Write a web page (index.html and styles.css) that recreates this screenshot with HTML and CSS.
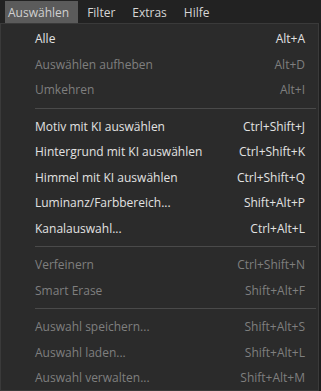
FILE: index.html
```html
<!DOCTYPE html>
<html lang="de">
<head>
    <meta charset="UTF-8">
    <title>Auswählen</title>
    <link rel="stylesheet" href="styles.css">
</head>
<body>
    <div class="menubar">
        <div class="menubar-item active">Auswählen</div>
        <div class="menubar-item">Filter</div>
        <div class="menubar-item">Extras</div>
        <div class="menubar-item">Hilfe</div>
    </div>
    <div class="menu">
        <div class="row"><span>Alle</span><span>Alt+A</span></div>
        <div class="row off"><span>Auswählen aufheben</span><span>Alt+D</span></div>
        <div class="row off"><span>Umkehren</span><span>Alt+I</span></div>
        <div class="sep"></div>
        <div class="row"><span>Motiv mit KI auswählen</span><span>Ctrl+Shift+J</span></div>
        <div class="row"><span>Hintergrund mit KI auswählen</span><span>Ctrl+Shift+K</span></div>
        <div class="row"><span>Himmel mit KI auswählen</span><span>Ctrl+Shift+Q</span></div>
        <div class="row"><span>Luminanz/Farbbereich...</span><span>Shift+Alt+P</span></div>
        <div class="row"><span>Kanalauswahl...</span><span>Ctrl+Alt+L</span></div>
        <div class="sep"></div>
        <div class="row off"><span>Verfeinern</span><span>Ctrl+Shift+N</span></div>
        <div class="row off"><span>Smart Erase</span><span>Shift+Alt+F</span></div>
        <div class="sep"></div>
        <div class="row off"><span>Auswahl speichern...</span><span>Shift+Alt+S</span></div>
        <div class="row off"><span>Auswahl laden...</span><span>Shift+Alt+L</span></div>
        <div class="row off"><span>Auswahl verwalten...</span><span>Shift+Alt+M</span></div>
    </div>
</body>
</html>
```
FILE: styles.css
```css
body {
    margin: 0;
    background-color: #1e1e1e;
    font-family: "Open Sans", "Noto Sans", sans-serif;
    font-size: 12px;
    color: #e2e2e2;
    width: 321px;
    height: 391px;
    overflow: hidden;
}
.menubar {
    display: flex;
    height: 23px;
    padding-left: 5px;
    background-color: #222222;
}
.menubar-item {
    display: flex;
    align-items: center;
    padding: 0 8px 0 9px;
    margin-top: 1px;
    color: #d6d6d6;
}
.menubar-item.active {
    background-color: #5b5b5b;
    color: #d0d0d0;
    padding: 0 9px 0 3px;
}
.menu {
    width: 319px;
    height: 368px;
    box-sizing: border-box;
    border: 1px solid #3a3a3a;
    background-color: #2b2b2b;
    padding: 2px 0 0 0;
}
.row {
    display: flex;
    justify-content: space-between;
    align-items: center;
    height: 25.5px;
    padding: 0 13px 0 34px;
}
.row.off {
    color: #7f7f7f;
}
.sep {
    height: 1px;
    margin: 5px 2px 5px 34px;
    background-color: #4a4a4a;
}
```
